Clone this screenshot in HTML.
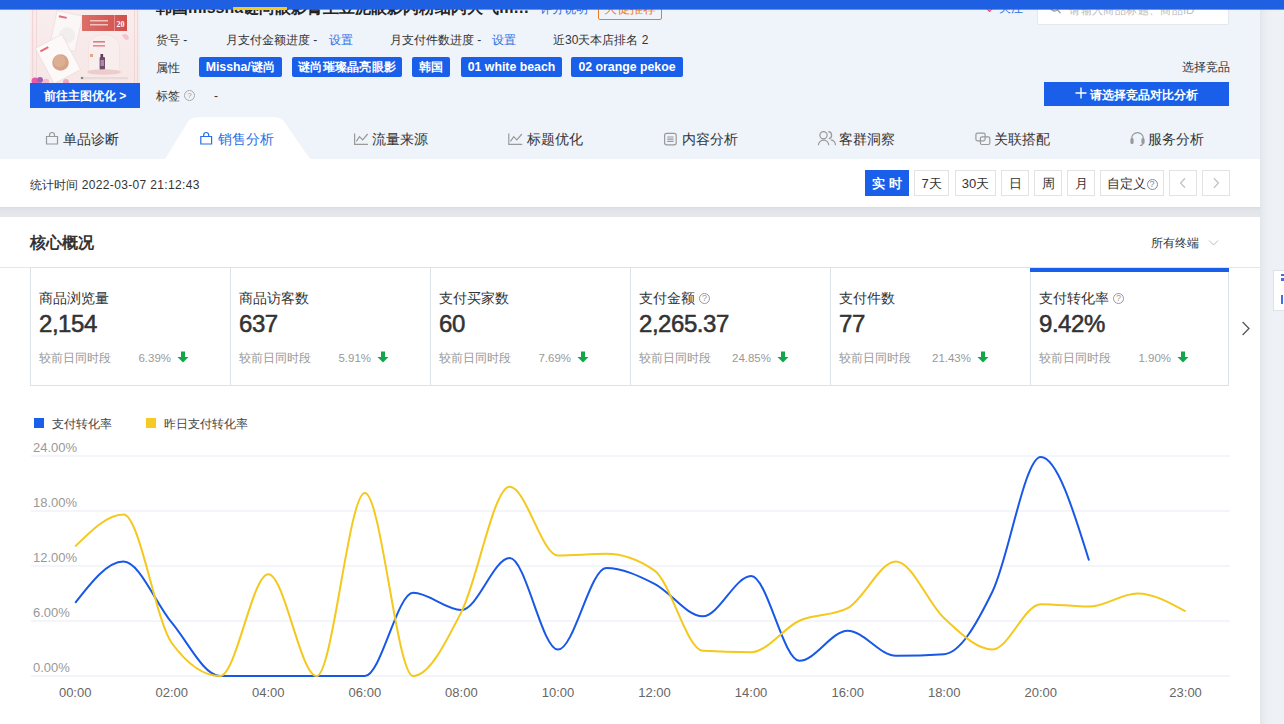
<!DOCTYPE html>
<html><head><meta charset="utf-8">
<style>
*{margin:0;padding:0;box-sizing:border-box;}
html,body{width:1284px;height:724px;overflow:hidden;}
body{position:relative;background:#eff3fa;font-family:"Liberation Sans",sans-serif;color:#333;font-size:12px;}
.a{position:absolute;white-space:nowrap;}
.c{display:inline-block;width:1em;text-align:center;font-style:normal;}
.strip{left:1260px;top:0;width:24px;height:724px;background:linear-gradient(90deg,#e2e5eb 0px,#e9ecf1 4px,#edf0f5 9px,#eef1f5 24px);}
.bar{left:0;top:0;width:1284px;height:10px;background:linear-gradient(180deg,#1f5fe1 0,#1f5fe1 9px,rgba(31,95,225,0.65) 9px,rgba(31,95,225,0.65) 10px);z-index:5;}
.hl{left:233px;top:7px;width:54px;height:3px;background:#f5cc1e;z-index:6;}
.title{left:156px;top:-1px;font-size:16px;line-height:18px;font-weight:bold;color:#222;}
.link{color:#2b6de5 !important;}
.row{font-size:12px;line-height:14px;color:#333;}
.tag{height:20px;line-height:21px;border-radius:2px;background:#1a5fe9;color:#fff;font-size:12.3px;font-weight:bold;text-align:center;}
.btnb{background:#1a5fe9;color:#fff;text-align:center;}
.tabs{left:0;top:110px;width:1260px;height:49px;}
.tab{font-size:14px;line-height:16px;color:#333;}
.ticon{stroke:#999;fill:none;stroke-width:1.2;}
.panel{left:0;top:159px;width:1260px;height:48px;background:#fff;}
.gap{left:0;top:207px;width:1260px;height:10px;background:linear-gradient(180deg,#d8dbe1 0px,#dfe2e7 2px,#e3e5ea 4px,#e6e8ec 10px);}
.card{left:0;top:217px;width:1260px;height:507px;background:#fff;}
.tb{height:26px;line-height:26px;border:1px solid #e3e3e3;background:#fff;color:#333;font-size:13px;text-align:center;}
.cell{top:267px;width:200px;height:119px;border:1px solid #dbe2ec;border-left-width:1px;}
.lbl{font-size:14px;line-height:16px;color:#333;}
.num{font-size:24px;line-height:28px;font-weight:bold;color:#333;}
.cmp{font-size:12px;line-height:14px;color:#999;}
.pct{font-size:12px;line-height:14px;color:#999;text-align:right;width:60px;}
.ax{font-size:12px;line-height:14px;color:#999;}
</style></head><body>
<div class="a strip"></div>
<div class="a bar"></div>
<div class="a hl"></div>

<!-- title row -->
<div class="a title"><i class="c">韩</i><i class="c">国</i>missha<i class="c">谜</i><i class="c">尚</i><i class="c">眼</i><i class="c">影</i><i class="c">膏</i><i class="c">土</i><i class="c">豆</i><i class="c">泥</i><i class="c">眼</i><i class="c">影</i><i class="c">闪</i><i class="c">粉</i><i class="c">细</i><i class="c">闪</i><i class="c">大</i><i class="c">气</i>m…</div>
<div class="a link" style="left:540px;top:2px;font-size:12px;line-height:14px;"><i class="c">评</i><i class="c">分</i><i class="c">说</i><i class="c">明</i></div>
<div class="a" style="left:598px;top:-2px;width:64px;height:22px;border:1px solid #f07a22;border-radius:2px;color:#f07a22;font-size:13px;line-height:20px;text-align:center;"><i class="c">大</i><i class="c">促</i><i class="c">推</i><i class="c">荐</i></div>
<div class="a" style="left:986px;top:5px;width:8px;height:8px;"><svg width="7" height="7" style="position:absolute;left:0;top:0"><path d="M3.5,6.5 L0.6,3.4 A1.6,1.6 0 0 1 3.5,1.3 A1.6,1.6 0 0 1 6.4,3.4 Z" fill="none" stroke="#e8536a" stroke-width="1.1"/></svg></div><div class="a" style="left:999px;top:1px;font-size:12px;line-height:14px;color:#2b6de5;"><i class="c">关</i><i class="c">注</i></div>
<div class="a" style="left:1037px;top:-10px;width:192px;height:35px;background:#fff;border:1px solid #e3e7ee;border-radius:2px;"></div>
<div class="a" style="left:1069px;top:3px;font-size:11.4px;line-height:14px;color:#bbb;"><i class="c">请</i><i class="c">输</i><i class="c">入</i><i class="c">商</i><i class="c">品</i><i class="c">标</i><i class="c">题</i><i class="c">、</i><i class="c">商</i><i class="c">品</i>ID</div><svg class="a" style="left:1049px;top:3px;" width="14" height="12"><circle cx="5.5" cy="4" r="4" stroke="#999" stroke-width="1.3" fill="none"/><path d="M8.5,7 L11.5,10" stroke="#999" stroke-width="1.3"/></svg>

<!-- product image -->
<svg class="a" style="left:30px;top:9px;" width="110" height="74">
  <defs>
    <linearGradient id="pg" x1="0" y1="0" x2="0" y2="1"><stop offset="0" stop-color="#f9eded"/><stop offset="1" stop-color="#f7e7e7"/></linearGradient>
    <linearGradient id="rb" x1="0" y1="0" x2="1" y2="0"><stop offset="0" stop-color="#dc6e68"/><stop offset="1" stop-color="#d0504c"/></linearGradient>
  </defs>
  <rect width="110" height="74" fill="url(#pg)"/>
  <rect x="2" y="0" width="1.2" height="74" fill="#f0d6d6"/>
  <rect x="6" y="0" width="0.8" height="74" fill="#efd3d2"/>
  <rect x="104" y="0" width="1" height="74" fill="#f0d6d6"/>
  <rect x="107" y="0" width="0.8" height="74" fill="#efd3d2"/>
  <g transform="translate(36,22) rotate(12)"><rect x="-13" y="-18" width="26" height="36" fill="#fbf7f7" stroke="#e8dada" stroke-width="0.6"/><circle cx="2" cy="4" r="8" fill="#f3eeee"/><rect x="-10" y="-14" width="8" height="2" fill="#e56a7c"/></g>
  <g transform="translate(28,50) rotate(-28)"><rect x="-15" y="-20" width="30" height="40" fill="#fdf9f9" stroke="#e6d9d9" stroke-width="0.6"/><rect x="-12" y="-16" width="9" height="2" fill="#e56a7c"/></g>
  <circle cx="30.5" cy="53.5" r="8.3" fill="#d7a386"/>
  <circle cx="29.5" cy="52" r="6" fill="#dcae92"/>
  <rect x="52" y="6" width="45" height="16" fill="url(#rb)"/>
  <rect x="84" y="6" width="1" height="16" fill="#e98c87"/>
  <text x="86.5" y="18" font-size="8" font-weight="bold" fill="#fff" font-family="Liberation Serif">20</text>
  <rect x="60" y="11" width="18" height="1.5" fill="#f3c2bf"/><rect x="60" y="15" width="18" height="1.5" fill="#f3c2bf"/>
  <path d="M58.5,64 V39 Q58.5,25.5 74,25.5 Q89.5,25.5 89.5,39 V64 Z" fill="#f9eeee" stroke="#f0dede" stroke-width="0.6"/>
  <rect x="63" y="32" width="12" height="1.6" fill="#e07a86"/><rect x="63" y="36" width="12" height="1.6" fill="#e58a95"/>
  <rect x="60" y="45" width="3" height="3" fill="#e2a48a"/>
  <rect x="70.5" y="45" width="2.6" height="3" fill="#5b3a52"/>
  <rect x="69.6" y="48" width="5.4" height="13" rx="1" fill="#6f4b68"/>
  <rect x="70.5" y="51" width="3.5" height="6" fill="#a98aa6"/>
  <ellipse cx="74" cy="63" rx="17" ry="2.8" fill="#eccccc"/>
  <rect x="52" y="68" width="46" height="2.2" fill="#e6dada"/>
  <circle cx="52" cy="69" r="1.3" fill="#888"/>
  <path d="M92,26 q6,-3 7,4 q-4,3 -7,-4z" fill="#f3c4d0"/>
  <circle cx="5" cy="72" r="3.5" fill="#e85aa8"/><circle cx="10" cy="71" r="3" fill="#9d5fb8"/><circle cx="16" cy="73" r="3.2" fill="#f5b8cc"/><circle cx="36" cy="73" r="3" fill="#f0a6c2"/>
</svg>
<div class="a btnb" style="left:30px;top:83px;width:110px;height:25px;line-height:27px;font-size:12px;font-weight:bold;overflow:hidden;"><i class="c">前</i><i class="c">往</i><i class="c">主</i><i class="c">图</i><i class="c">优</i><i class="c">化</i> &gt;</div>

<!-- info rows -->
<div class="a row" style="left:156px;top:33px;"><i class="c">货</i><i class="c">号</i> -</div>
<div class="a row" style="left:226px;top:33px;"><i class="c">月</i><i class="c">支</i><i class="c">付</i><i class="c">金</i><i class="c">额</i><i class="c">进</i><i class="c">度</i> -</div>
<div class="a row link" style="left:329px;top:33px;"><i class="c">设</i><i class="c">置</i></div>
<div class="a row" style="left:390px;top:33px;"><i class="c">月</i><i class="c">支</i><i class="c">付</i><i class="c">件</i><i class="c">数</i><i class="c">进</i><i class="c">度</i> -</div>
<div class="a row link" style="left:492px;top:33px;"><i class="c">设</i><i class="c">置</i></div>
<div class="a row" style="left:553px;top:33px;"><i class="c">近</i>30<i class="c">天</i><i class="c">本</i><i class="c">店</i><i class="c">排</i><i class="c">名</i> 2</div>

<div class="a row" style="left:156px;top:61px;"><i class="c">属</i><i class="c">性</i></div>
<div class="a tag" style="left:199px;top:57px;width:83px;">Missha/<i class="c">谜</i><i class="c">尚</i></div>
<div class="a tag" style="left:292px;top:57px;width:110px;"><i class="c">谜</i><i class="c">尚</i><i class="c">璀</i><i class="c">璨</i><i class="c">晶</i><i class="c">亮</i><i class="c">眼</i><i class="c">影</i></div>
<div class="a tag" style="left:412px;top:57px;width:38px;"><i class="c">韩</i><i class="c">国</i></div>
<div class="a tag" style="left:461px;top:57px;width:101px;">01 white beach</div>
<div class="a tag" style="left:571px;top:57px;width:112px;">02 orange pekoe</div>

<div class="a row" style="left:156px;top:89px;"><i class="c">标</i><i class="c">签</i></div>
<div class="a" style="left:184px;top:90px;width:11px;height:11px;border:1px solid #aaa;border-radius:50%;font-size:8px;line-height:9px;text-align:center;color:#999;">?</div>
<div class="a row" style="left:214px;top:89px;">-</div>

<div class="a row" style="left:1182px;top:60px;"><i class="c">选</i><i class="c">择</i><i class="c">竞</i><i class="c">品</i></div>
<div class="a btnb" style="left:1044px;top:82px;width:185px;height:24px;"></div><svg class="a" style="left:1075px;top:87px;" width="12" height="12"><path d="M6,0.5 V11.5 M0.5,6 H11.5" stroke="#fff" stroke-width="1.4"/></svg><div class="a" style="left:1090px;top:88px;font-size:12px;line-height:14px;color:#fff;font-weight:bold;"><i class="c">请</i><i class="c">选</i><i class="c">择</i><i class="c">竞</i><i class="c">品</i><i class="c">对</i><i class="c">比</i><i class="c">分</i><i class="c">析</i></div>

<!-- tabs -->
<svg class="a" style="left:0;top:110px;" width="1260" height="49">
  <path d="M165,49 L189,10 Q194,7 200,7 L273,7 Q279,7 283,10 L310,49 Z" fill="#fff"/>
</svg>
<div class="a tab" style="left:63px;top:131px;"><i class="c">单</i><i class="c">品</i><i class="c">诊</i><i class="c">断</i></div>
<div class="a tab" style="left:218px;top:131px;color:#2b6de5;"><i class="c">销</i><i class="c">售</i><i class="c">分</i><i class="c">析</i></div>
<div class="a tab" style="left:372px;top:131px;"><i class="c">流</i><i class="c">量</i><i class="c">来</i><i class="c">源</i></div>
<div class="a tab" style="left:527px;top:131px;"><i class="c">标</i><i class="c">题</i><i class="c">优</i><i class="c">化</i></div>
<div class="a tab" style="left:682px;top:131px;"><i class="c">内</i><i class="c">容</i><i class="c">分</i><i class="c">析</i></div>
<div class="a tab" style="left:839px;top:131px;"><i class="c">客</i><i class="c">群</i><i class="c">洞</i><i class="c">察</i></div>
<div class="a tab" style="left:994px;top:131px;"><i class="c">关</i><i class="c">联</i><i class="c">搭</i><i class="c">配</i></div>
<div class="a tab" style="left:1148px;top:131px;"><i class="c">服</i><i class="c">务</i><i class="c">分</i><i class="c">析</i></div>
<svg class="a" style="left:0;top:110px;" width="1260" height="49">
  <g class="ticon">
    <path d="M46.5,26.5 h11 v7.5 h-11 z M49.5,26.5 v-1.5 a2.5,2.5 0 0 1 5,0 v1.5"/>
    <path d="M200.8,26.5 h10.8 v7.5 h-10.8 z M203.7,26.5 v-1.5 a2.5,2.5 0 0 1 5,0 v1.5" style="stroke:#2b6de5"/>
    <path d="M354.6,23.5 V34.4 H368 M356.3,31.4 L359.5,26.7 L362.6,29.8 L367.7,24"/>
    <path d="M508.8,23.5 V34.4 H522.2 M510.5,31.4 L513.7,26.7 L516.8,29.8 L521.9,24"/>
    <rect x="664.6" y="23.4" width="11.6" height="11.4" rx="2"/>
    <path d="M667.2,27 h6.4 M667.2,29.2 h6.4 M667.2,31.4 h6.4"/>
    <circle cx="823.5" cy="25.3" r="3.6"/>
    <path d="M818.4,35.3 a5.2,5.2 0 0 1 10.4,0 M828.3,21.7 a3.6,3.6 0 0 1 0.5,7.1 M830.8,29.8 a5,5 0 0 1 4.6,5.5"/>
    <rect x="975.9" y="23.2" width="9.2" height="7.6" rx="1.5"/>
    <rect x="980.4" y="26.9" width="9.4" height="7.6" rx="1.5"/>
    <path d="M1131.6,31 v-2.5 a5.9,5.9 0 0 1 11.8,0 v2.5 M1142.8,33.5 q0,2 -3,2"/>
    <rect x="1131" y="28.5" width="2" height="5" rx="1" style="fill:#999"/>
    <rect x="1142" y="28.5" width="2" height="5" rx="1" style="fill:#999"/>
  </g>
</svg>

<!-- stats panel -->
<div class="a panel"></div>
<div class="a" style="left:30px;top:178px;font-size:12px;line-height:14px;color:#333;letter-spacing:0.35px;"><i class="c">统</i><i class="c">计</i><i class="c">时</i><i class="c">间</i> 2022-03-07 21:12:43</div>
<div class="a tb" style="left:865px;top:170px;width:44px;background:#1a5fe9;border-color:#1a5fe9;color:#fff;font-weight:bold;"><i class="c">实</i><span style="display:inline-block;width:4px;"></span><i class="c">时</i></div>
<div class="a tb" style="left:914px;top:170px;width:35px;">7<i class="c">天</i></div>
<div class="a tb" style="left:955px;top:170px;width:41px;">30<i class="c">天</i></div>
<div class="a tb" style="left:1001px;top:170px;width:28px;"><i class="c">日</i></div>
<div class="a tb" style="left:1034px;top:170px;width:28px;"><i class="c">周</i></div>
<div class="a tb" style="left:1067px;top:170px;width:28px;"><i class="c">月</i></div>
<div class="a tb" style="left:1100px;top:170px;width:64px;"><i class="c">自</i><i class="c">定</i><i class="c">义</i><span style="display:inline-block;width:11px;height:11px;border:1px solid #888;border-radius:50%;font-size:9px;line-height:9px;color:#888;vertical-align:1px;margin-left:1px;">?</span></div>
<div class="a tb" style="left:1169px;top:170px;width:28px;"></div><svg class="a" style="left:1177px;top:176px;" width="12" height="14"><path d="M8,2.2 L3.6,7 L8,11.8" stroke="#c4c4c4" stroke-width="1.3" fill="none"/></svg>
<div class="a tb" style="left:1202px;top:170px;width:28px;"></div><svg class="a" style="left:1210px;top:176px;" width="12" height="14"><path d="M4,2.2 L8.4,7 L4,11.8" stroke="#c4c4c4" stroke-width="1.3" fill="none"/></svg>

<div class="a gap"></div>
<div class="a card"></div>
<div class="a" style="left:30px;top:234px;font-size:16px;line-height:18px;font-weight:bold;color:#333;"><i class="c">核</i><i class="c">心</i><i class="c">概</i><i class="c">况</i></div>
<div class="a" style="left:1151px;top:236px;font-size:12px;line-height:14px;color:#333;"><i class="c">所</i><i class="c">有</i><i class="c">终</i><i class="c">端</i></div>
<svg class="a" style="left:1208px;top:239px;" width="11" height="8"><path d="M1,1.5 L5.5,6 L10,1.5" stroke="#bbb" fill="none" stroke-width="1"/></svg>

<!-- metrics -->
<div class="a" style="left:0;top:267px;width:1260px;height:1px;background:#e3e8f0;"></div>
<div class="a cell" style="left:30px;width:201px;"></div>
<div class="a lbl" style="left:39px;top:290px;"><i class="c">商</i><i class="c">品</i><i class="c">浏</i><i class="c">览</i><i class="c">量</i></div>
<div class="a num" style="left:39px;top:310px;letter-spacing:-0.45px;font-weight:normal;-webkit-text-stroke:0.55px #333;">2,154</div>
<div class="a cmp" style="left:39px;top:351px;"><i class="c">较</i><i class="c">前</i><i class="c">日</i><i class="c">同</i><i class="c">时</i><i class="c">段</i></div>
<div class="a pct" style="left:111px;top:351px;font-size:11.5px;">6.39%</div>
<svg class="a" style="left:177px;top:350.5px;" width="12" height="12"><path d="M4,0.5 h4 v5.5 h3.5 L6,11.5 L0.5,6 h3.5 z" fill="#13a54a"/></svg>
<div class="a cell" style="left:230px;width:201px;"></div>
<div class="a lbl" style="left:239px;top:290px;"><i class="c">商</i><i class="c">品</i><i class="c">访</i><i class="c">客</i><i class="c">数</i></div>
<div class="a num" style="left:239px;top:310px;letter-spacing:-0.45px;font-weight:normal;-webkit-text-stroke:0.55px #333;">637</div>
<div class="a cmp" style="left:239px;top:351px;"><i class="c">较</i><i class="c">前</i><i class="c">日</i><i class="c">同</i><i class="c">时</i><i class="c">段</i></div>
<div class="a pct" style="left:311px;top:351px;font-size:11.5px;">5.91%</div>
<svg class="a" style="left:377px;top:350.5px;" width="12" height="12"><path d="M4,0.5 h4 v5.5 h3.5 L6,11.5 L0.5,6 h3.5 z" fill="#13a54a"/></svg>
<div class="a cell" style="left:430px;width:201px;"></div>
<div class="a lbl" style="left:439px;top:290px;"><i class="c">支</i><i class="c">付</i><i class="c">买</i><i class="c">家</i><i class="c">数</i></div>
<div class="a num" style="left:439px;top:310px;letter-spacing:-0.45px;font-weight:normal;-webkit-text-stroke:0.55px #333;">60</div>
<div class="a cmp" style="left:439px;top:351px;"><i class="c">较</i><i class="c">前</i><i class="c">日</i><i class="c">同</i><i class="c">时</i><i class="c">段</i></div>
<div class="a pct" style="left:511px;top:351px;font-size:11.5px;">7.69%</div>
<svg class="a" style="left:577px;top:350.5px;" width="12" height="12"><path d="M4,0.5 h4 v5.5 h3.5 L6,11.5 L0.5,6 h3.5 z" fill="#13a54a"/></svg>
<div class="a cell" style="left:630px;width:201px;"></div>
<div class="a lbl" style="left:639px;top:290px;"><i class="c">支</i><i class="c">付</i><i class="c">金</i><i class="c">额</i><span style="display:inline-block;width:11px;height:11px;border:1px solid #999;border-radius:50%;font-size:9px;line-height:9px;text-align:center;color:#999;vertical-align:2px;margin-left:4px;">?</span></div>
<div class="a num" style="left:639px;top:310px;letter-spacing:-0.45px;font-weight:normal;-webkit-text-stroke:0.55px #333;">2,265.37</div>
<div class="a cmp" style="left:639px;top:351px;"><i class="c">较</i><i class="c">前</i><i class="c">日</i><i class="c">同</i><i class="c">时</i><i class="c">段</i></div>
<div class="a pct" style="left:711px;top:351px;font-size:11.5px;">24.85%</div>
<svg class="a" style="left:777px;top:350.5px;" width="12" height="12"><path d="M4,0.5 h4 v5.5 h3.5 L6,11.5 L0.5,6 h3.5 z" fill="#13a54a"/></svg>
<div class="a cell" style="left:830px;width:201px;"></div>
<div class="a lbl" style="left:839px;top:290px;"><i class="c">支</i><i class="c">付</i><i class="c">件</i><i class="c">数</i></div>
<div class="a num" style="left:839px;top:310px;letter-spacing:-0.45px;font-weight:normal;-webkit-text-stroke:0.55px #333;">77</div>
<div class="a cmp" style="left:839px;top:351px;"><i class="c">较</i><i class="c">前</i><i class="c">日</i><i class="c">同</i><i class="c">时</i><i class="c">段</i></div>
<div class="a pct" style="left:911px;top:351px;font-size:11.5px;">21.43%</div>
<svg class="a" style="left:977px;top:350.5px;" width="12" height="12"><path d="M4,0.5 h4 v5.5 h3.5 L6,11.5 L0.5,6 h3.5 z" fill="#13a54a"/></svg>
<div class="a cell" style="left:1030px;width:199px;"></div>
<div class="a lbl" style="left:1039px;top:290px;"><i class="c">支</i><i class="c">付</i><i class="c">转</i><i class="c">化</i><i class="c">率</i><span style="display:inline-block;width:11px;height:11px;border:1px solid #999;border-radius:50%;font-size:9px;line-height:9px;text-align:center;color:#999;vertical-align:2px;margin-left:4px;">?</span></div>
<div class="a num" style="left:1039px;top:310px;letter-spacing:-0.45px;font-weight:normal;-webkit-text-stroke:0.55px #333;">9.42%</div>
<div class="a cmp" style="left:1039px;top:351px;"><i class="c">较</i><i class="c">前</i><i class="c">日</i><i class="c">同</i><i class="c">时</i><i class="c">段</i></div>
<div class="a pct" style="left:1111px;top:351px;font-size:11.5px;">1.90%</div>
<svg class="a" style="left:1177px;top:350.5px;" width="12" height="12"><path d="M4,0.5 h4 v5.5 h3.5 L6,11.5 L0.5,6 h3.5 z" fill="#13a54a"/></svg>
<div class="a" style="left:1030px;top:268px;width:199px;height:4px;background:#1a5fe9;"></div>
<svg class="a" style="left:1240px;top:321px;" width="12" height="16"><path d="M2.6,1 L9,7.5 L2.6,14" stroke="#555" fill="none" stroke-width="1.25"/></svg>
<div class="a" style="left:1273px;top:270px;width:20px;height:41px;background:#fff;border:1px solid #dde3ec;"></div><div class="a" style="left:1281px;top:274px;width:3px;height:2px;background:#3a72e6;"></div><div class="a" style="left:1281px;top:278px;width:3px;height:3px;background:#3a72e6;"></div><div class="a" style="left:1281px;top:295px;width:2px;height:9px;background:#3a72e6;"></div>

<!-- chart -->
<div class="a" style="left:34px;top:418px;width:10px;height:10px;background:#1a5fe9;"></div>
<div class="a ax" style="left:52px;top:417px;color:#444;"><i class="c">支</i><i class="c">付</i><i class="c">转</i><i class="c">化</i><i class="c">率</i></div>
<div class="a" style="left:146px;top:418px;width:10px;height:10px;background:#f5cb23;"></div>
<div class="a ax" style="left:164px;top:417px;color:#444;"><i class="c">昨</i><i class="c">日</i><i class="c">支</i><i class="c">付</i><i class="c">转</i><i class="c">化</i><i class="c">率</i></div>
<svg class="a" style="left:0;top:0;" width="1260" height="724">
<rect x="31" y="675.0" width="1199" height="2" fill="#f3f5fb"/>
<rect x="31" y="620.0" width="1199" height="2" fill="#f3f5fb"/>
<rect x="31" y="565.0" width="1199" height="2" fill="#f3f5fb"/>
<rect x="31" y="510.0" width="1199" height="2" fill="#f3f5fb"/>
<rect x="31" y="455.0" width="1199" height="2" fill="#f3f5fb"/>
<path d="M75.20,602.94 C91.29,582.27 107.39,561.60 123.48,561.60 C139.57,561.60 155.66,603.58 171.76,622.65 C187.85,641.72 203.94,676.00 220.03,676.00 C236.13,676.00 252.22,676.00 268.31,676.00 C284.41,676.00 300.50,676.00 316.59,676.00 C332.68,676.00 348.78,676.00 364.87,676.00 C380.96,676.00 397.06,592.86 413.15,592.86 C429.24,592.86 445.33,610.00 461.43,610.00 C477.52,610.00 493.61,558.12 509.70,558.12 C525.80,558.12 541.89,649.60 557.98,649.60 C574.08,649.60 590.17,568.02 606.26,568.02 C622.35,568.02 638.45,575.73 654.54,583.78 C670.63,591.83 686.72,616.33 702.82,616.33 C718.91,616.33 735.00,576.08 751.10,576.08 C767.19,576.08 783.28,660.78 799.37,660.78 C815.47,660.78 831.56,630.72 847.65,630.72 C863.74,630.72 879.84,655.83 895.93,655.83 C912.02,655.83 928.12,655.28 944.21,654.18 C960.30,653.08 976.39,624.36 992.49,591.48 C1008.58,558.61 1024.67,456.92 1040.77,456.92 C1056.86,456.92 1072.95,508.71 1089.04,560.50" fill="none" stroke="#1858e6" stroke-width="2"/>
<path d="M75.20,546.38 C91.29,530.43 107.39,514.48 123.48,514.48 C139.57,514.48 155.66,621.00 171.76,643.00 C187.85,665.00 203.94,676.00 220.03,676.00 C236.13,676.00 252.22,574.25 268.31,574.25 C284.41,574.25 300.50,676.00 316.59,676.00 C332.68,676.00 348.78,493.03 364.87,493.03 C380.96,493.03 397.06,676.00 413.15,676.00 C429.24,676.00 445.33,643.38 461.43,611.83 C477.52,580.28 493.61,486.71 509.70,486.71 C525.80,486.71 541.89,555.46 557.98,555.46 C574.08,555.46 590.17,553.81 606.26,553.81 C622.35,553.81 638.45,559.40 654.54,570.58 C670.63,581.77 686.72,649.72 702.82,650.70 C718.91,651.68 735.00,652.17 751.10,652.17 C767.19,652.17 783.28,628.06 799.37,620.73 C815.47,613.39 831.56,616.54 847.65,608.17 C863.74,599.79 879.84,561.42 895.93,561.42 C912.02,561.42 928.12,603.58 944.21,618.25 C960.30,632.92 976.39,649.42 992.49,649.42 C1008.58,649.42 1024.67,604.13 1040.77,604.13 C1056.86,604.13 1072.95,606.61 1089.04,606.61 C1105.14,606.61 1121.23,593.50 1137.32,593.50 C1153.41,593.50 1169.51,602.48 1185.60,611.47" fill="none" stroke="#f4c81c" stroke-width="2"/>
</svg>
<div class="a ax" style="left:33px;top:661px;font-size:13px;">0.00%</div>
<div class="a ax" style="left:33px;top:606px;font-size:13px;">6.00%</div>
<div class="a ax" style="left:33px;top:551px;font-size:13px;">12.00%</div>
<div class="a ax" style="left:33px;top:496px;font-size:13px;">18.00%</div>
<div class="a ax" style="left:33px;top:441px;font-size:13px;">24.00%</div>
<div class="a ax" style="left:45.2px;top:686px;width:60px;text-align:center;color:#666;font-size:13px;">00:00</div>
<div class="a ax" style="left:141.8px;top:686px;width:60px;text-align:center;color:#666;font-size:13px;">02:00</div>
<div class="a ax" style="left:238.3px;top:686px;width:60px;text-align:center;color:#666;font-size:13px;">04:00</div>
<div class="a ax" style="left:334.9px;top:686px;width:60px;text-align:center;color:#666;font-size:13px;">06:00</div>
<div class="a ax" style="left:431.4px;top:686px;width:60px;text-align:center;color:#666;font-size:13px;">08:00</div>
<div class="a ax" style="left:528.0px;top:686px;width:60px;text-align:center;color:#666;font-size:13px;">10:00</div>
<div class="a ax" style="left:624.5px;top:686px;width:60px;text-align:center;color:#666;font-size:13px;">12:00</div>
<div class="a ax" style="left:721.1px;top:686px;width:60px;text-align:center;color:#666;font-size:13px;">14:00</div>
<div class="a ax" style="left:817.7px;top:686px;width:60px;text-align:center;color:#666;font-size:13px;">16:00</div>
<div class="a ax" style="left:914.2px;top:686px;width:60px;text-align:center;color:#666;font-size:13px;">18:00</div>
<div class="a ax" style="left:1010.8px;top:686px;width:60px;text-align:center;color:#666;font-size:13px;">20:00</div>
<div class="a ax" style="left:1155.6px;top:686px;width:60px;text-align:center;color:#666;font-size:13px;">23:00</div>
</body></html>
